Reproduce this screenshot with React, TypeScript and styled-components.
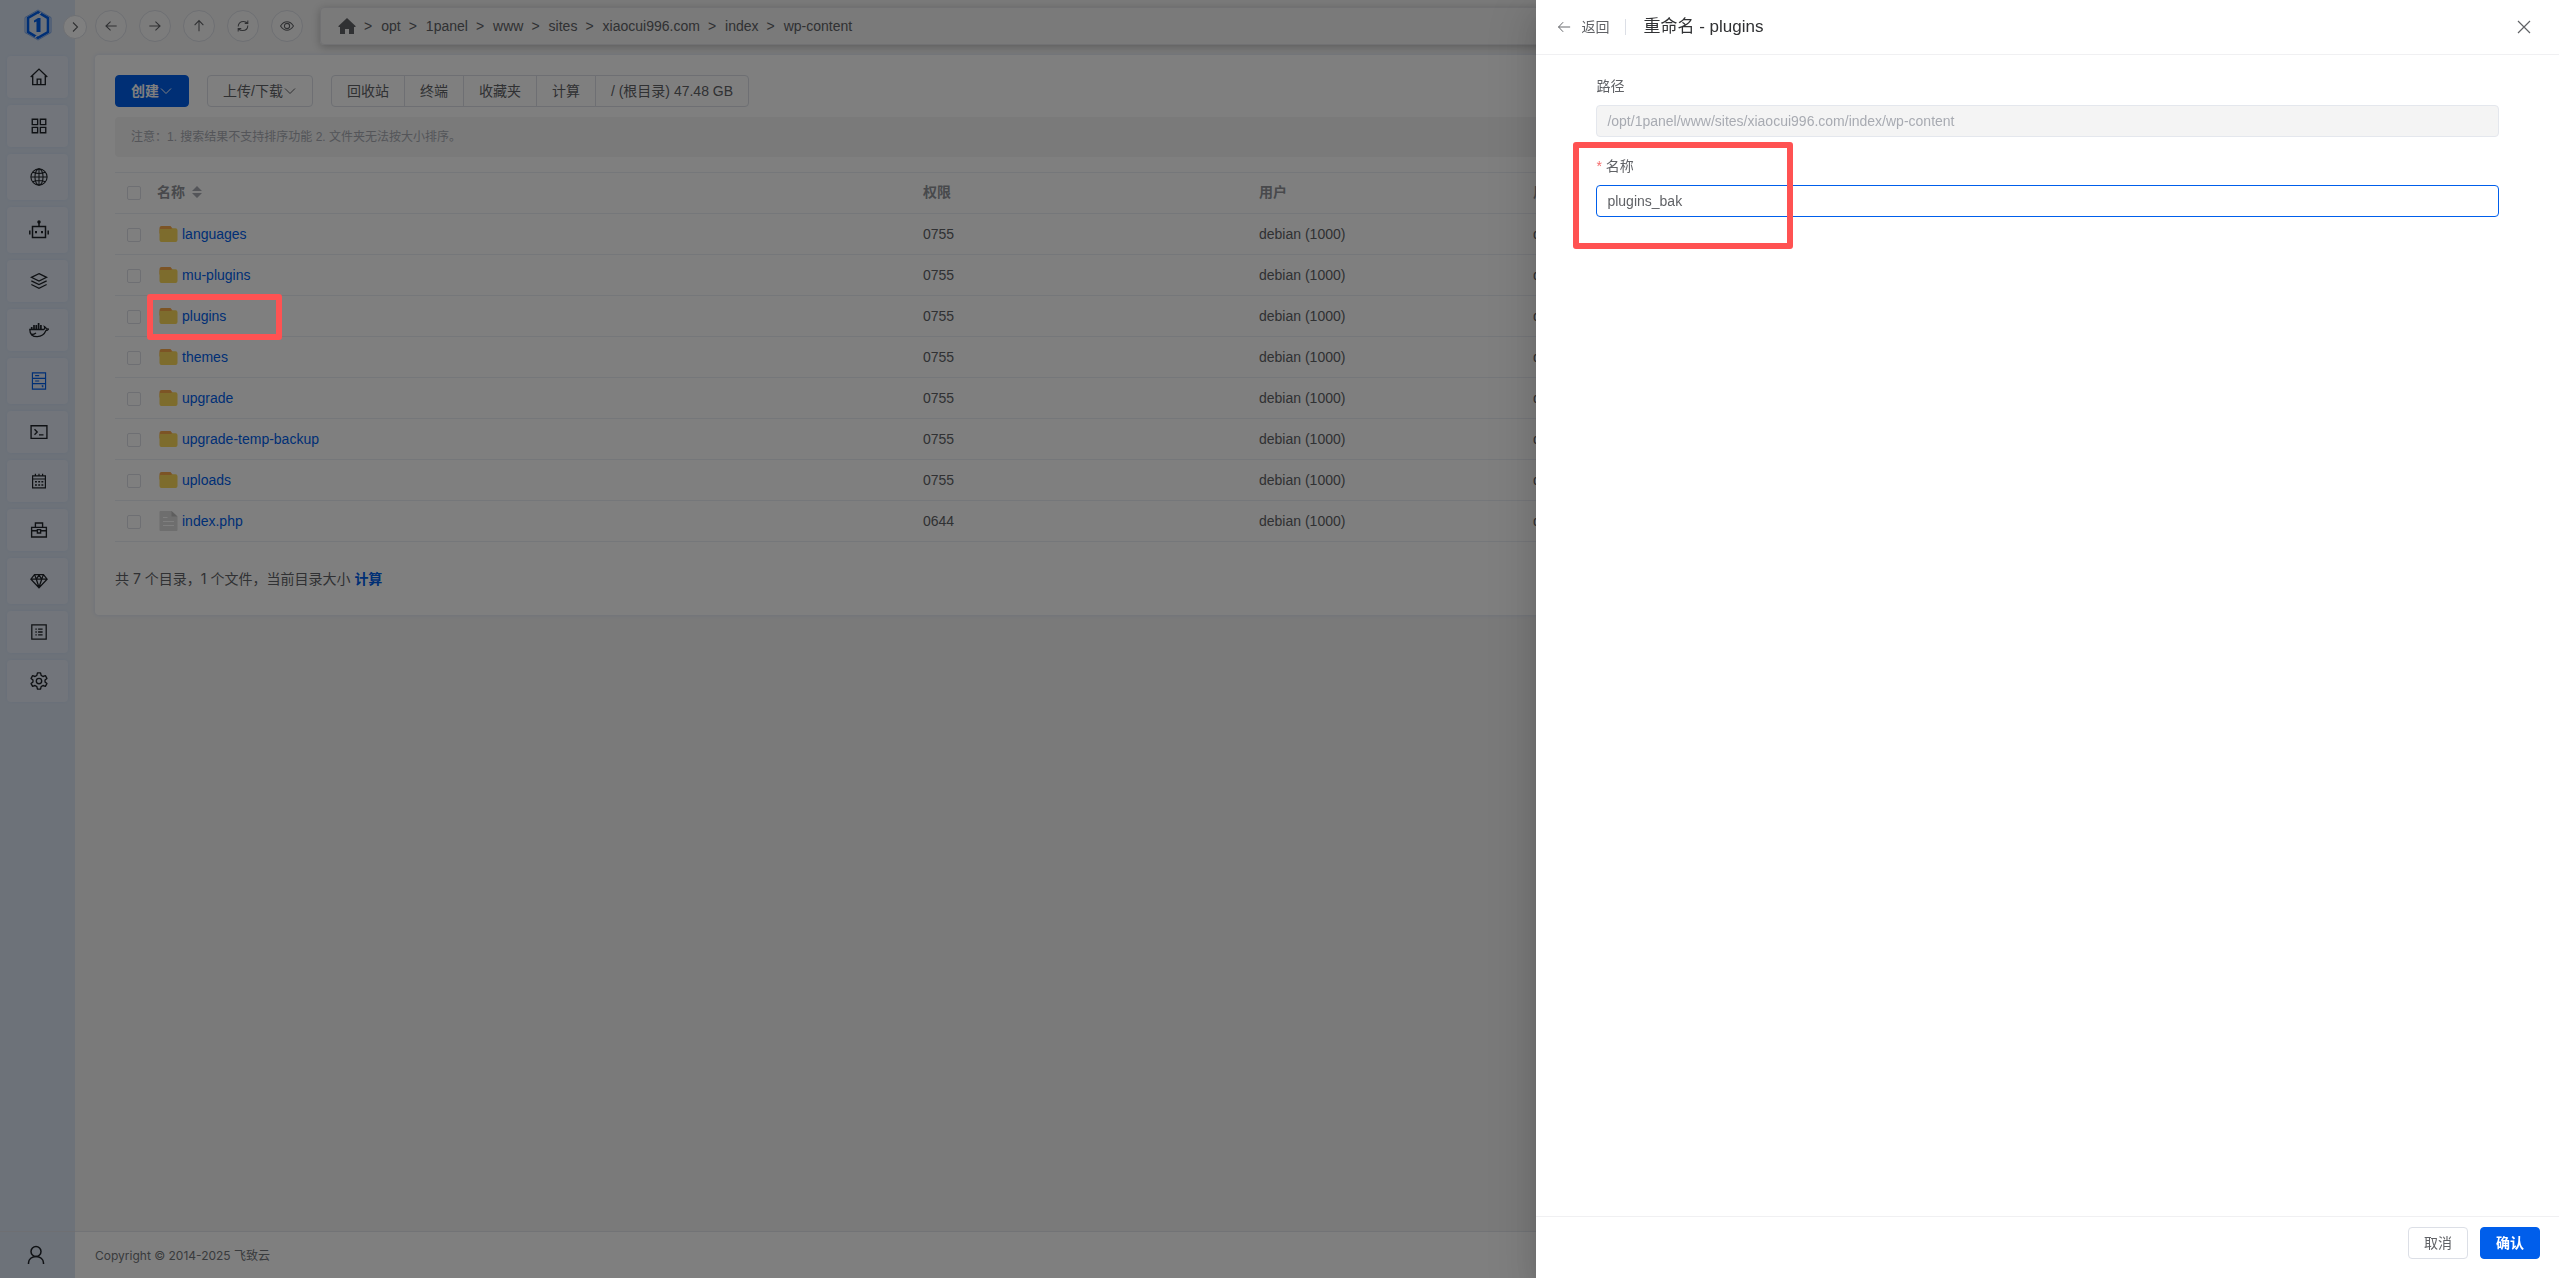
import React, { useState } from 'react';
import styled, { createGlobalStyle, css } from 'styled-components';

const sans = `'Liberation Sans', 'Noto Sans CJK SC', sans-serif`;
const inter = `Inter, 'Noto Sans CJK SC', sans-serif`;

const GlobalStyle = createGlobalStyle`
  *, *::before, *::after { box-sizing: border-box; }
  html, body, #root { height: 100%; }
  body {
    margin: 0;
    overflow: hidden;
    font-family: ${sans};
    font-size: 14px;
    line-height: 20px;
    color: #606266;
    background: #f4f4f4;
  }
  button, input { font: inherit; }
`;

const Shell = styled.div`
  display: flex;
  height: 100vh;
  overflow: hidden;
`;

const Sidebar = styled.nav`
  display: flex;
  flex: none;
  flex-direction: column;
  width: 75px;
  background: rgba(0, 94, 235, 0.1);
`;

const Brand = styled.a`
  display: flex;
  justify-content: center;
  align-items: center;
  height: 56px;
  padding-bottom: 7px;
`;

const Menu = styled.ul`
  display: flex;
  flex-direction: column;
  flex: 1;
  gap: 7px;
  margin: 0;
  padding: 0 7px;
  list-style: none;
`;

const MenuLink = styled.a<{ $tall?: boolean; $active?: boolean }>`
  display: flex;
  align-items: center;
  justify-content: center;
  height: ${p => (p.$tall ? 46 : 42)}px;
  padding-left: 3px;
  border-radius: 4px;
  background: rgba(255, 255, 255, 0.25);
  box-shadow: 0 0 4px rgba(0, 94, 235, 0.06);
  color: ${p => (p.$active ? '#005eeb' : '#1f2329')};
`;

const UserLink = styled.a`
  display: flex;
  align-items: center;
  justify-content: center;
  height: 47px;
  padding-right: 3px;
  border-top: 1px solid #dcdfe6;
  color: #1f2329;
`;

const Main = styled.main`
  display: flex;
  flex: 1;
  flex-direction: column;
  min-width: 0;
`;

const TopBar = styled.header`
  display: flex;
  align-items: center;
  gap: 12px;
  height: 55px;
  padding: 0 20px 4px;
`;

const round = css`
  display: flex;
  align-items: center;
  justify-content: center;
  padding: 0;
  border: 1px solid #dcdfe6;
  border-radius: 50%;
  background: #fff;
  color: #606266;
`;

const CircleButton = styled.button`
  ${round}
  width: 32px;
  height: 32px;
  background: #f9f9f9;
`;

const CollapseButton = styled.button`
  ${round}
  position: absolute;
  top: 15px;
  left: 63px;
  width: 24px;
  height: 24px;
`;

const PathBar = styled.nav`
  display: flex;
  flex: 1;
  align-items: center;
  gap: 8px;
  height: 38px;
  margin-left: 5px;
  padding: 0 16px;
  border: 1px solid #e2e2e6;
  border-radius: 4px;
  box-shadow: 0 2px 8px rgba(0, 0, 0, 0.24);
`;

const Crumb = styled.a`
  display: flex;
  padding-left: 1px;
  color: #606266;
  text-decoration: none;
`;

const Card = styled.section`
  margin: 0 20px;
  padding: 20px 20px 26px;
  border-radius: 4px;
  background: #fff;
  box-shadow: 0 0 4px rgba(0, 94, 235, 0.12);
`;

const Toolbar = styled.div`
  display: flex;
  gap: 18px;
`;

const Button = styled.button<{ $primary?: boolean }>`
  display: inline-flex;
  align-items: center;
  justify-content: center;
  height: 32px;
  padding: 0 15px;
  border: 1px solid ${p => (p.$primary ? '#005eeb' : '#dcdfe6')};
  border-radius: 4px;
  background: ${p => (p.$primary ? '#005eeb' : '#fff')};
  color: ${p => (p.$primary ? '#fff' : '#606266')};
  font-weight: ${p => (p.$primary ? 700 : 400)};
  white-space: nowrap;
`;

const ButtonGroup = styled.div`
  display: flex;

  ${Button} + ${Button} { margin-left: -1px; }
  ${Button}:not(:first-child) { border-top-left-radius: 0; border-bottom-left-radius: 0; }
  ${Button}:not(:last-child) { border-top-right-radius: 0; border-bottom-right-radius: 0; }
`;

const Notice = styled.p`
  margin: 10px 0 15px;
  padding: 10px 16px;
  border-radius: 4px;
  background: #f4f4f5;
  color: #a8abb2;
  font-size: 12px;
`;

const FileTable = styled.table`
  width: 100%;
  border-collapse: collapse;
  table-layout: fixed;
  border-top: 1px solid #ebeef5;

  th, td {
    height: 41px;
    padding: 0;
    border-bottom: 1px solid #ebeef5;
    text-align: left;
    vertical-align: middle;
    white-space: nowrap;
  }
  th { padding-bottom: 2px; color: #909399; font-weight: 700; }
`;

const Col = styled.col<{ $w?: number }>`
  width: ${p => (p.$w ? `${p.$w}px` : 'auto')};
`;

const Check = styled.input`
  display: block;
  width: 14px;
  height: 14px;
  margin: 2px 0 0 12px;
  appearance: none;
  border: 1px solid #dcdfe6;
  border-radius: 2px;
  background: #fff;
`;

const SortHead = styled.span`
  display: flex;
  align-items: center;
  gap: 7px;
`;

const FileName = styled.span`
  display: flex;
  align-items: center;
  gap: 4px;
  padding-left: 2px;
`;

const FileLink = styled.a`
  color: #005eeb;
  text-decoration: none;
`;

const Summary = styled.p`
  margin: 0;
  padding: 27px 0 0;
  font-family: ${inter};
`;

const SummaryLink = styled.a`
  color: #005eeb;
  font-weight: 700;
  text-decoration: none;
`;

const Footer = styled.footer`
  display: flex;
  align-items: center;
  height: 47px;
  margin-top: auto;
  padding: 2px 20px 0;
  border-top: 1px solid #e4e7ed;
  background: #fff;
  color: #73767a;
  font-family: ${inter};
  font-size: 12px;
`;

const Overlay = styled.div`
  position: fixed;
  inset: 0;
  display: flex;
  justify-content: flex-end;
  background: rgba(0, 0, 0, 0.5);
`;

const Drawer = styled.aside`
  display: flex;
  flex-direction: column;
  width: calc(40% - 1px);
  background: #fff;
  box-shadow: 0 16px 48px 16px rgba(0, 0, 0, 0.08), 0 12px 32px rgba(0, 0, 0, 0.12), 0 8px 16px -8px rgba(0, 0, 0, 0.16);
`;

const DrawerHeader = styled.header`
  display: flex;
  align-items: center;
  height: 55px;
  padding: 0 28px 0 21px;
  border-bottom: 1px solid #f0f0f2;
`;

const BackButton = styled.button`
  display: flex;
  align-items: center;
  gap: 10px;
  padding: 0 16px 0 0;
  border: 0;
  background: none;
  color: #606266;
`;

const Divider = styled.span`
  width: 1px;
  height: 16px;
  margin-right: 17px;
  background: #dcdfe6;
`;

const Title = styled.h1`
  margin: 0 auto 0 0;
  color: #303133;
  font-size: 17px;
  font-weight: 400;
`;

const CloseButton = styled.button`
  display: flex;
  padding: 0;
  border: 0;
  background: none;
  color: #606266;
`;

const Form = styled.form`
  display: flex;
  flex: 1;
  flex-direction: column;
  gap: 18px;
  padding: 20px 60px;
`;

const Field = styled.div`
  display: flex;
  flex-direction: column;
  gap: 8px;
`;

const Label = styled.label`
  line-height: 22px;
`;

const Required = styled.span`
  margin-right: 4px;
  color: #f56c6c;
`;

const TextInput = styled.input`
  height: 32px;
  padding: 0 10px;
  border: 1px solid #005eeb;
  border-radius: 4px;
  outline: none;
  background: #fff;
  color: #606266;

  &:disabled {
    border-color: #e4e7ed;
    background: #f4f4f4;
    color: #a8abb2;
  }
`;

const DrawerFooter = styled.footer`
  display: flex;
  justify-content: flex-end;
  gap: 12px;
  padding: 10px 19px 19px;
  border-top: 1px solid #f0f0f2;
`;

/* Annotation frames drawn over the page. */
const Marker = styled.div<{ $x: number; $y: number; $w: number; $h: number }>`
  position: absolute;
  top: ${p => p.$y}px;
  left: ${p => p.$x}px;
  width: ${p => p.$w}px;
  height: ${p => p.$h}px;
  border: 6px solid #ff5252;
  border-radius: 3px;
  pointer-events: none;
`;

const DrawerMarker = styled(Marker)`
  left: calc(60% + ${p => p.$x}px);
`;

const Svg = ({ size = 18, w = 1.5, children, vb = 20 }: { size?: number; w?: number; vb?: number; children: React.ReactNode }) => (
  <svg width={size} height={size} viewBox={`0 0 ${vb} ${vb}`} fill="none" stroke="currentColor" strokeWidth={w} aria-hidden="true">
    {children}
  </svg>
);

const Logo = () => (
  <svg width="28" height="32" viewBox="0 0 28 32" fill="none" aria-hidden="true">
    <path d="M14 1 27 8.500V23.500L14 31 1 23.500V8.500z" stroke="#7ba5e8" strokeWidth="1" />
    <path d="M16.500 4.700 24 9v14l-10 5.800-2.500-1.500" stroke="#005eeb" strokeWidth="2.600" />
    <path d="M11.500 27.300 4 23V9l10-5.800 2.500 1.500" stroke="#005eeb" strokeWidth="2.600" />
    <path d="M17 3.500 12 8M11 28.500l5-4" stroke="#dce5f3" strokeWidth="1.200" />
    <path d="M10 11.500 14 9h2.500v14h-4V12.500L10 13.500z" fill="#005eeb" />
  </svg>
);

const Chevron = () => (
  <svg width="14" height="14" viewBox="0 0 14 14" fill="none" stroke="currentColor" strokeWidth="1" aria-hidden="true">
    <path d="M2 4.500 7 9.500 12 4.500" />
  </svg>
);

const Folder = () => (
  <svg width="19" height="16" viewBox="0 0 19 16" aria-hidden="true">
    <path d="M.5 2a2 2 0 0 1 2-2h9l2 2.500v5H.5z" fill="#f9a94b" />
    <path d="M.5 4a1 1 0 0 1 1-1H12l1-.8h3.500a2 2 0 0 1 2 2V14a2 2 0 0 1-2 2h-14a2 2 0 0 1-2-2z" fill="#fad85a" />
  </svg>
);

const FileIcon = () => (
  <svg width="19" height="20" viewBox="0 0 19 20" aria-hidden="true">
    <path d="M1.500 0h11l6 5.500V19a1 1 0 0 1-1 1h-16a1 1 0 0 1-1-1V1a1 1 0 0 1 1-1z" fill="#dcdcdc" />
    <path d="M12.500 0l6 5.500h-6z" fill="#bdbdbd" />
    <path d="M4 6.500h4.500M4 10.500h11M4 14.500h11" stroke="#fff" strokeWidth="1" />
  </svg>
);

type Item = { name: string; tall?: boolean; active?: boolean; icon: React.ReactNode };

const menu: Item[] = [
  { name: '概览', icon: <Svg><path d="M.8 10 10 1.200 19.200 10M3 8.500v10h14v-10M8 18.500v-6.200h4v6.200" /></Svg> },
  { name: '应用商店', icon: <Svg><path d="M2.500 2.500h6v6h-6zM11.500 2.500h6v6h-6zM2.500 11.500h6v6h-6zM11.500 11.500h6v6h-6z" /></Svg> },
  { name: '网站', tall: true, icon: <Svg w={1.200}><circle cx="10" cy="10" r="9" /><ellipse cx="10" cy="10" rx="4.500" ry="9" /><path d="M1 10h18M10 1v18M3 4.800q7 2.600 14 0M3 15.200q7-2.600 14 0" /></Svg> },
  { name: 'AI', tall: true, icon: <Svg size={20} w={1.500}><path d="M3.500 6.500h13v11h-13zM10 6.500V2M.8 10.500v4M19.200 10.500v4" /><path d="M7 11v2.200M13 11v2.200" strokeWidth="2" /><circle cx="10" cy="2" r="1" fill="currentColor" /></Svg> },
  { name: '数据库', icon: <Svg w={1.400}><path d="M10 1.800 18.500 5.900 10 10 1.500 5.900zM1.500 9.800 10 14l8.500-4.200M1.500 13.900 10 18.100l8.500-4.200" /></Svg> },
  { name: '容器', icon: <Svg size={20} w={1.300}><path d="M.8 9.500h14c1-.3 1-2 .6-3 1.400.6 1.800 1.500 2 2.400.8-.2 1.400-.1 2.100.2-.6 1.200-1.400 1.500-2.500 1.500-1.800 4.200-4.400 6-8.800 6C3.500 16.600.8 14.500.8 9.500z" /><path d="M2.700 7v2M5 5v4M7.300 5v4M9.600 3v6M11.900 5v4" strokeWidth="1.700" /><path d="M2.500 14.500c2 0 3.500-.6 4.500-1.500" /></Svg> },
  { name: '主机', tall: true, active: true, icon: <Svg w={1.300}><path d="M2.700 1h14.600v18H2.700zM2.700 7h14.600M2.700 13h14.600M5.700 4h4.500M5.700 10h4.500M13 15.500h1.200v1.500" /></Svg> },
  { name: '终端', icon: <Svg w={1.500}><path d="M1.200 3h17.600v14H1.200z" /><path d="M5 7l3 3-3 3M10 13.200H15" /></Svg> },
  { name: '计划任务', icon: <Svg size={16} w={1.500}><path d="M2 3.500h16v15H2zM2 7.500h16M5.500 1v2.500M10 1v2.500M14.500 1v2.500" /><path d="M5 11h10.500M5 15h10.500" strokeWidth="1.800" strokeDasharray="2.400 1.600" /></Svg> },
  { name: '工具箱', icon: <Svg w={1.500}><path d="M1.800 7h16.400v10.800H1.800zM6 6.500V2.200h8v4.300M2 10.800h6M12 10.800h6M8.200 9.500h3.600v3.800H8.200z" /></Svg> },
  { name: '高级功能', tall: true, icon: <Svg w={1.400}><path d="M5 3h10l4 5-9 9.500L1 8zM1.500 8h17M7 8l3 9M13 8l-3 9M5.300 3.500 7 8l3-4.500L13 8l1.700-4.500" /></Svg> },
  { name: '日志审计', icon: <Svg w={1.400}><path d="M2 2h16v16H2z" /><path d="M6 6.700h1.500M6 10h1.500M6 13.300h1.500M9 6.700h5M9 10h5M9 13.300h5" /></Svg> },
  { name: '面板设置', icon: <Svg w={1.500}><path d="M8.300 1h3.400l.7 2.800 2 1.200 2.700-.9 1.700 3L16.700 9v2l2.100 1.900-1.700 3-2.700-.9-2 1.200-.7 2.800H8.300l-.7-2.800-2-1.200-2.700.9-1.700-3L3.300 11V9L1.200 7.100l1.700-3 2.700.9 2-1.200z" strokeLinejoin="round" /><circle cx="10" cy="10" r="3" /></Svg> },
];

const navIcons = [
  { name: '后退', icon: <path d="M14.500 8H2M7.500 3 2.200 8l5.300 5" /> },
  { name: '前进', icon: <path d="M1.500 8H14M8.500 3l5.300 5-5.300 5" /> },
  { name: '上一级', icon: <path d="M8 14V1.500M3 7l5-5.200L13 7" /> },
  { name: '刷新', icon: <path d="M2.500 8.500C2.500 5 5 2.800 8.500 2.800c2 0 3.500.6 4.800 2M13.500 7.500c0 3.500-2.500 5.700-6 5.700-2 0-3.500-.6-4.800-2M13.500 1.800v3.200H10M2.500 14.200V11H6" /> },
  { name: '显示隐藏文件', icon: <><path d="M.6 8c4.200-6.400 10.600-6.400 14.800 0-4.200 6.400-10.600 6.400-14.800 0z" /><circle cx="8" cy="8" r="3" /></> },
];

const crumbs = ['opt', '1panel', 'www', 'sites', 'xiaocui996.com', 'index', 'wp-content'];

const files = [
  ['languages', '0755'],
  ['mu-plugins', '0755'],
  ['plugins', '0755'],
  ['themes', '0755'],
  ['upgrade', '0755'],
  ['upgrade-temp-backup', '0755'],
  ['uploads', '0755'],
  ['index.php', '0644'],
];

export default function App() {
  const [name, setName] = useState('plugins_bak');

  return (
    <>
      <GlobalStyle />
      <Shell>
        <Sidebar>
          <Brand href="#" aria-label="1Panel"><Logo /></Brand>
          <Menu>
            {menu.map(m => (
              <li key={m.name}>
                <MenuLink href="#" aria-label={m.name} $tall={m.tall} $active={m.active}>{m.icon}</MenuLink>
              </li>
            ))}
          </Menu>
          <UserLink href="#" aria-label="用户">
            <Svg size={20} w={1.500}><circle cx="10" cy="6.500" r="5" /><path d="M2.500 19v-1c0-4 3.500-6.500 7.500-6.500s7.500 2.500 7.500 6.500v1" /></Svg>
          </UserLink>
        </Sidebar>

        <Main>
          <TopBar>
            {navIcons.map(n => (
              <CircleButton key={n.name} type="button" aria-label={n.name}>
                <Svg size={14} vb={16} w={1.200}>{n.icon}</Svg>
              </CircleButton>
            ))}
            <PathBar aria-label="路径">
              <Crumb href="#" aria-label="根目录">
                <svg width="18" height="16" viewBox="0 0 18 16" fill="currentColor" aria-hidden="true">
                  <path d="M9 0 17.500 8v1H16v7h-5v-5H7v5H2V9H.5V8z" />
                </svg>
              </Crumb>
              {crumbs.map(c => (
                <React.Fragment key={c}>
                  <span>&gt;</span>
                  <Crumb href="#">{c}</Crumb>
                </React.Fragment>
              ))}
            </PathBar>
          </TopBar>

          <Card>
            <Toolbar>
              <Button type="button" $primary>创建<Chevron /></Button>
              <Button type="button">上传/下载<Chevron /></Button>
              <ButtonGroup>
                <Button type="button">回收站</Button>
                <Button type="button">终端</Button>
                <Button type="button">收藏夹</Button>
                <Button type="button">计算</Button>
                <Button type="button">/ (根目录) 47.48 GB</Button>
              </ButtonGroup>
            </Toolbar>
            <Notice>注意：1. 搜索结果不支持排序功能 2. 文件夹无法按大小排序。</Notice>
            <FileTable>
              <colgroup>
                <Col $w={42} />
                <Col $w={766} />
                <Col $w={336} />
                <Col $w={274} />
                <Col />
              </colgroup>
              <thead>
                <tr>
                  <th><Check type="checkbox" aria-label="全选" /></th>
                  <th>
                    <SortHead>
                      名称
                      <svg width="10" height="12" viewBox="0 0 10 12" fill="#a8abb2" aria-hidden="true">
                        <path d="M5 0l5 5H0zM5 12l5-5H0z" />
                      </svg>
                    </SortHead>
                  </th>
                  <th>权限</th>
                  <th>用户</th>
                  <th>用户组</th>
                </tr>
              </thead>
              <tbody>
                {files.map(([file, mode]) => (
                  <tr key={file}>
                    <td><Check type="checkbox" aria-label={file} /></td>
                    <td>
                      <FileName>
                        {file.endsWith('.php') ? <FileIcon /> : <Folder />}
                        <FileLink href="#">{file}</FileLink>
                      </FileName>
                    </td>
                    <td>{mode}</td>
                    <td>debian (1000)</td>
                    <td>debian (1000)</td>
                  </tr>
                ))}
              </tbody>
            </FileTable>
            <Summary>
              共 7 个目录，1 个文件，当前目录大小 <SummaryLink href="#">计算</SummaryLink>
            </Summary>
          </Card>

          <Footer>Copyright © 2014-2025 飞致云</Footer>
        </Main>
      </Shell>

      <CollapseButton type="button" aria-label="展开菜单">
        <Svg size={12} vb={12} w={1.100}><path d="M4 1.500 8.500 6 4 10.500" /></Svg>
      </CollapseButton>

      <Overlay>
        <Drawer>
          <DrawerHeader>
            <BackButton type="button">
              <Svg size={14} vb={16} w={1.100}><path d="M15 8H1.500M7 2.500 1.800 8 7 13.500" /></Svg>
              返回
            </BackButton>
            <Divider />
            <Title>重命名 - plugins</Title>
            <CloseButton type="button" aria-label="关闭">
              <Svg size={14} vb={14} w={1.200}><path d="M1 1l12 12M13 1 1 13" /></Svg>
            </CloseButton>
          </DrawerHeader>
          <Form id="rename" onSubmit={e => e.preventDefault()}>
            <Field>
              <Label htmlFor="path">路径</Label>
              <TextInput id="path" disabled value="/opt/1panel/www/sites/xiaocui996.com/index/wp-content" />
            </Field>
            <Field>
              <Label htmlFor="name"><Required>*</Required>名称</Label>
              <TextInput id="name" value={name} onChange={e => setName(e.target.value)} />
            </Field>
          </Form>
          <DrawerFooter>
            <Button type="button">取消</Button>
            <Button type="submit" form="rename" $primary>确认</Button>
          </DrawerFooter>
        </Drawer>
        <Marker $x={147} $y={294} $w={135} $h={46} />
        <DrawerMarker $x={38} $y={142} $w={220} $h={107} />
      </Overlay>
    </>
  );
}
